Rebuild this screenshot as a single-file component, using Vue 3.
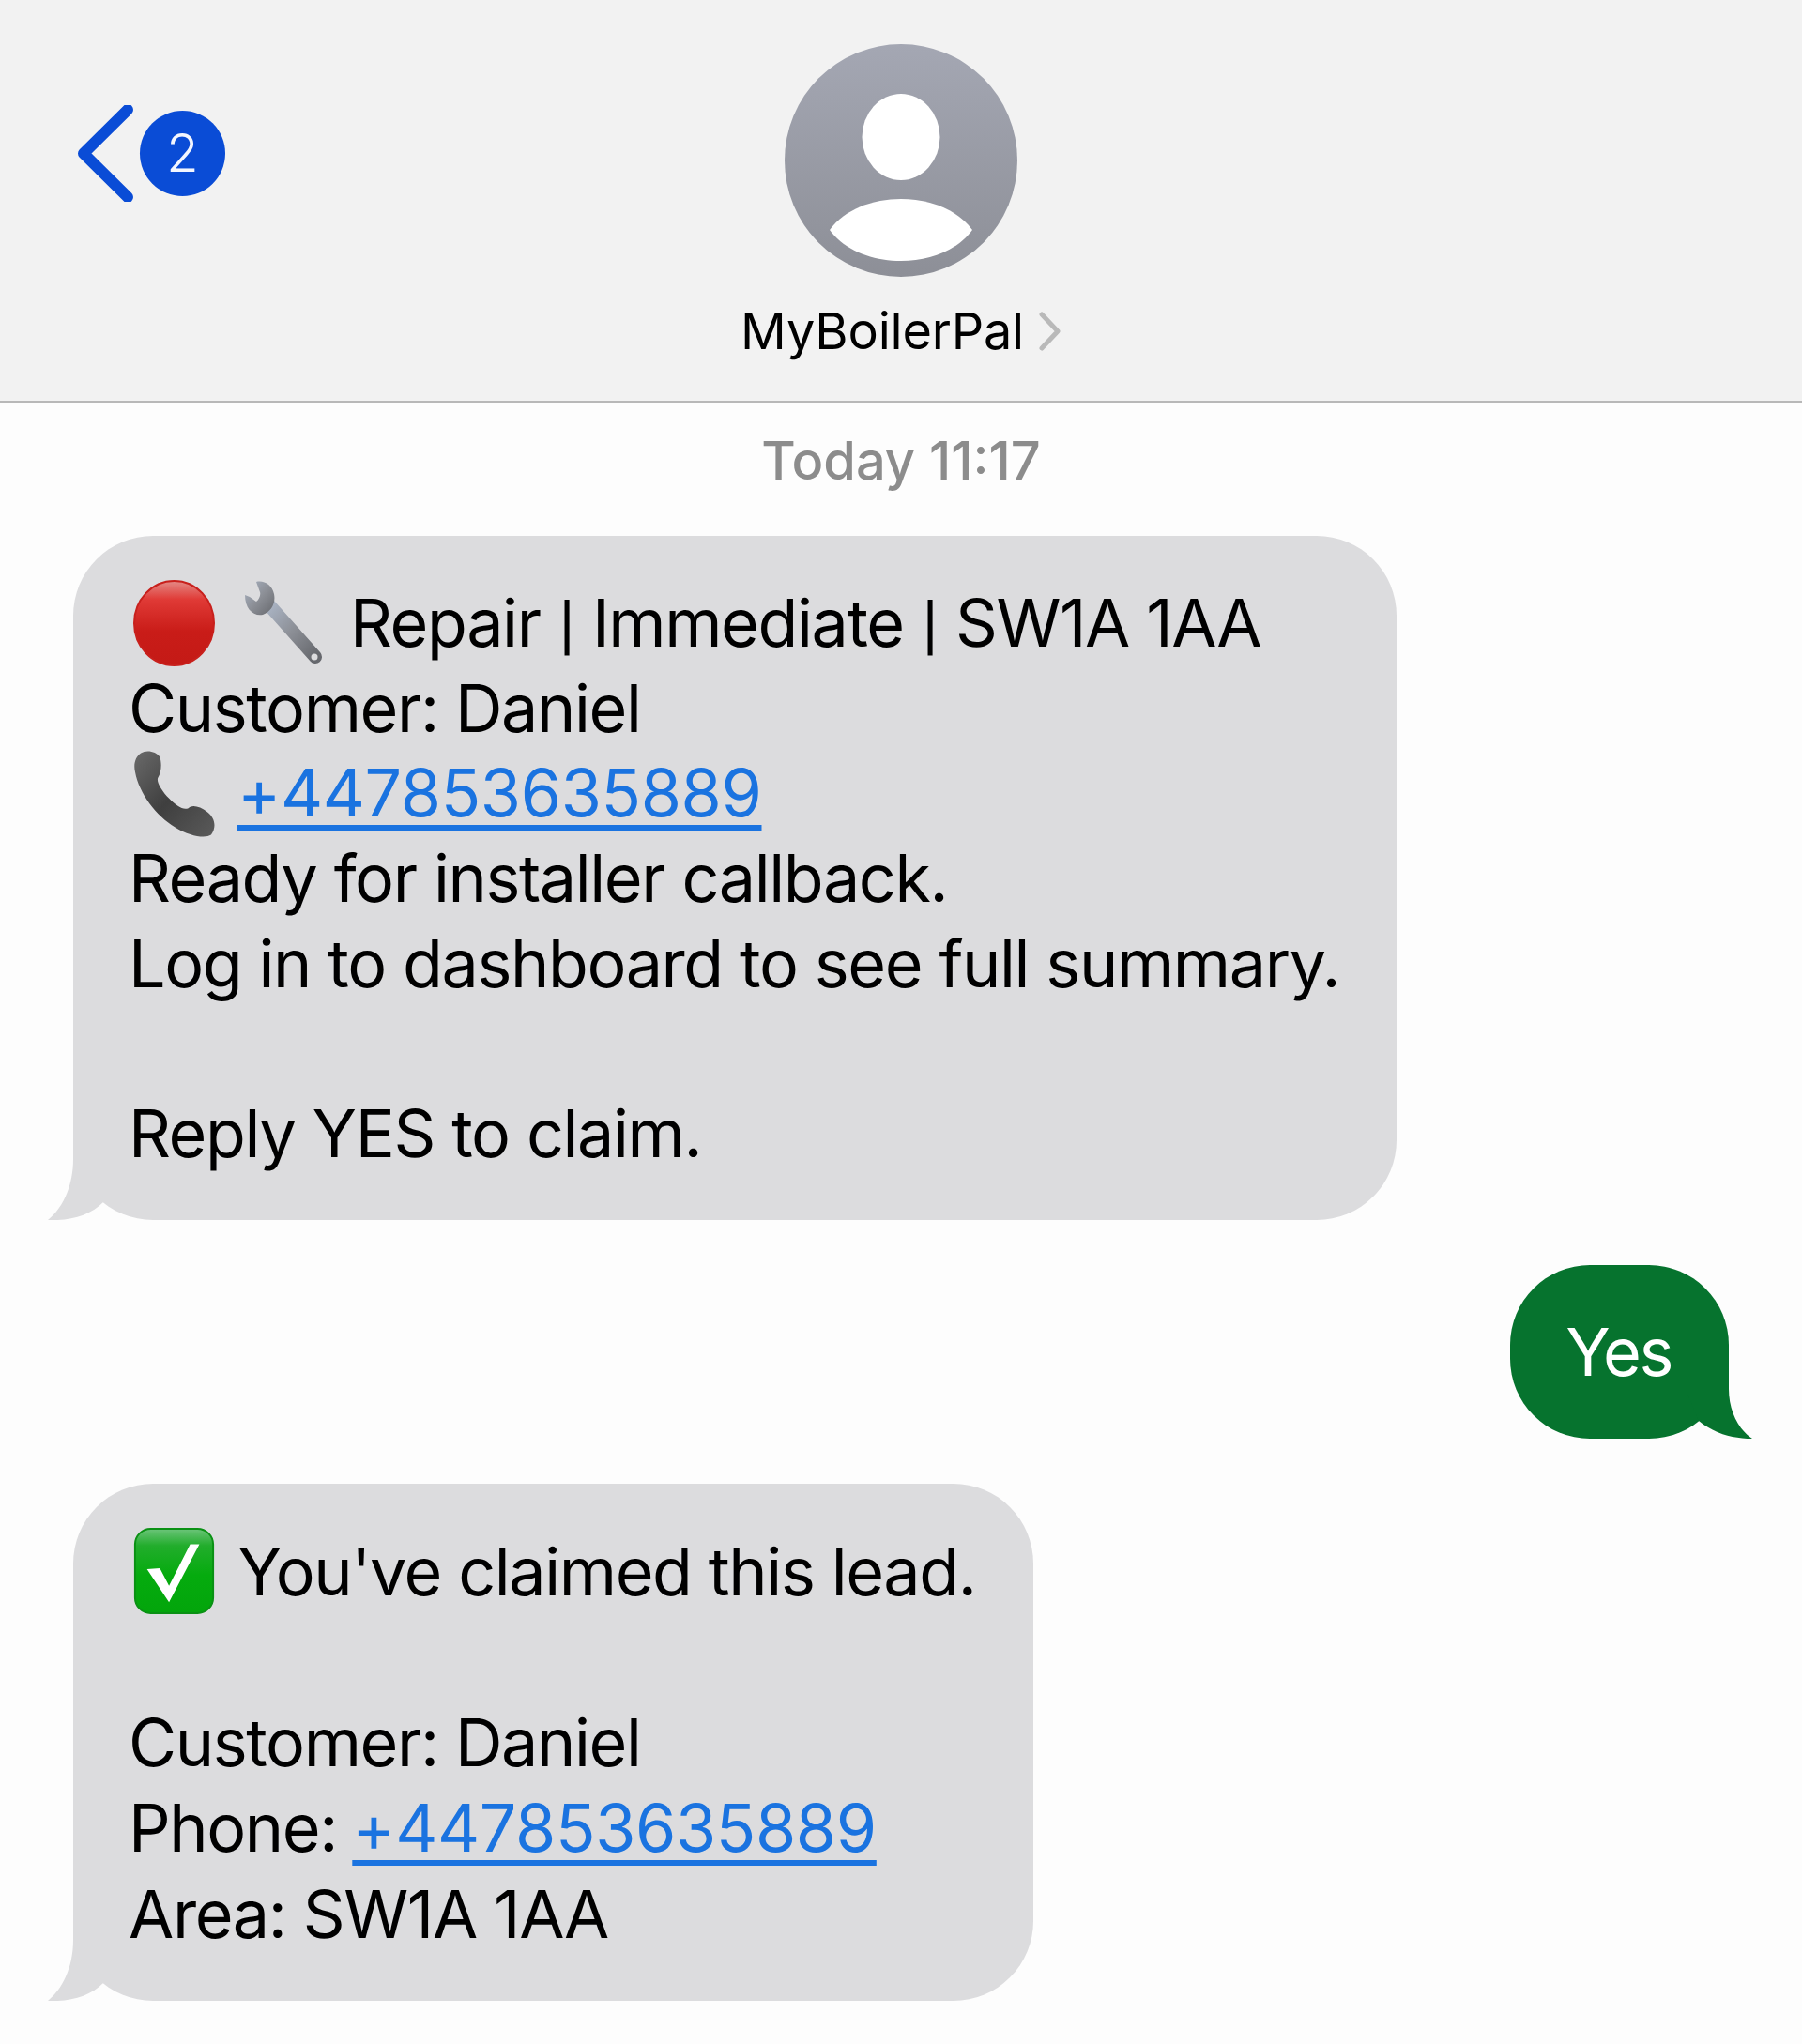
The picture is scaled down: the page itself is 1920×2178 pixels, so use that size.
<script setup>
const phone = '+447853635889'
</script>

<template>
  <div class="page">
    <header class="top">
      <div class="back">
        <svg class="chev" viewBox="0 0 60 103"><path d="M54 5 L7 51.500 L54 98" /></svg>
        <span class="badge">2</span>
      </div>
      <div class="contact">
        <svg class="avatar" viewBox="0 0 248 248">
          <defs>
            <linearGradient id="av" x1="0" y1="0" x2="0" y2="1">
              <stop offset="0" stop-color="#a4a7b3" />
              <stop offset="1" stop-color="#8d8f97" />
            </linearGradient>
          </defs>
          <circle cx="124" cy="124" r="124" fill="url(#av)" />
          <ellipse cx="124" cy="99" rx="41.500" ry="46" fill="#fff" />
          <path d="M48 198 C64 176 94 165 124 165 C154 165 184 176 200 198 C184 220 154 231 124 231 C94 231 64 220 48 198 Z" fill="#fff" />
        </svg>
        <div class="name">
          <span>MyBoilerPal</span>
          <svg class="more" viewBox="0 0 24 42"><path d="M3 3 L20 21 L3 39" /></svg>
        </div>
      </div>
      <div></div>
    </header>

    <main class="thread">
      <div class="stamp">Today 11:17</div>

      <div class="bubble in">
        <svg class="tail tail-in" viewBox="0 0 90 90"><path d="M27 0 L27 25 C27 55 15 78 0 90 C25 91 45 85 59 71 L90 40 L60 0 Z" /></svg>
        <div class="line">
          <svg class="emoji" viewBox="0 0 87 92">
            <defs>
              <linearGradient id="red" x1="0" y1="0" x2="0" y2="1">
                <stop offset="0" stop-color="#e48a86" />
                <stop offset=".22" stop-color="#e03a36" />
                <stop offset=".6" stop-color="#c91c18" />
                <stop offset="1" stop-color="#c41a16" />
              </linearGradient>
            </defs>
            <ellipse cx="43.500" cy="46" rx="42.500" ry="45" fill="url(#red)" stroke="#c8201c" stroke-width="2" />
          </svg>
          <svg class="wrench" viewBox="0 0 83 90">
            <defs>
              <linearGradient id="wr" x1="0" y1="0" x2="1" y2="1">
                <stop offset="0" stop-color="#aab4c4" />
                <stop offset=".5" stop-color="#8c8f96" />
                <stop offset="1" stop-color="#66686d" />
              </linearGradient>
            </defs>
            <path d="M26 26 L75 81" stroke="url(#wr)" stroke-width="14" stroke-linecap="round" fill="none" />
            <path d="M12 1 C20 -1 29 4 31 14 C33 24 28 33 19 36 C9 38 0 30 0 15 L5 17 L12 22 C15 20 17 15 16 12 Z" fill="url(#wr)" />
            <circle cx="74" cy="81" r="3.500" fill="#dcdcde" />
          </svg>
          <span>Repair <span class="pipe">|</span> Immediate <span class="pipe">|</span> SW1A 1AA</span>
        </div>
        <div class="line">Customer: Daniel</div>
        <div class="line">
          <svg class="emoji" viewBox="0 0 86 90">
            <defs>
              <linearGradient id="ph" x1="0" y1="0" x2="1" y2="1">
                <stop offset="0" stop-color="#6a6a6a" />
                <stop offset=".5" stop-color="#3f3f3f" />
                <stop offset="1" stop-color="#5a5a5a" />
              </linearGradient>
            </defs>
            <path d="M8 2 C14 -2 24 0 28 6 C30 12 30 22 26 28 C24 32 30 42 38 50 C46 58 52 62 58 60 C62 56 70 58 78 64 C86 70 88 80 82 88 C76 92 60 90 44 80 C24 68 6 44 2 22 C0 14 2 6 8 2 Z" fill="url(#ph)" />
          </svg>
          <a class="link">{{ phone }}</a>
        </div>
        <div class="line">Ready for installer callback.</div>
        <div class="line">Log in to dashboard to see full summary.</div>
        <div class="line"></div>
        <div class="line">Reply YES to claim.</div>
      </div>

      <div class="bubble out">
        <svg class="tail tail-out" viewBox="0 0 90 90"><path d="M65 0 L65 37 C65 60 75 80 90 90 C70 90 50 85 33 71 L20 40 Z" /></svg>
        <div class="line">Yes</div>
      </div>

      <div class="bubble in claimed">
        <svg class="tail tail-in" viewBox="0 0 90 90"><path d="M27 0 L27 25 C27 55 15 78 0 90 C25 91 45 85 59 71 L90 40 L60 0 Z" /></svg>
        <div class="line">
          <svg class="emoji" viewBox="0 0 87 94">
            <defs>
              <linearGradient id="gr" x1="0" y1="0" x2="0" y2="1">
                <stop offset="0" stop-color="#6cc47a" />
                <stop offset=".2" stop-color="#22ad2c" />
                <stop offset=".55" stop-color="#05ab0e" />
                <stop offset="1" stop-color="#03a50b" />
              </linearGradient>
            </defs>
            <rect x="1" y="1" width="85" height="92" rx="17" fill="url(#gr)" stroke="#0a9114" stroke-width="2" />
            <path d="M14 45 L28 44 L38 63 L61 18 L71 18 L38 81 Z" fill="#fff" />
          </svg>
          <span>You've claimed this lead.</span>
        </div>
        <div class="line"></div>
        <div class="line">Customer: Daniel</div>
        <div class="line"><span>Phone:&nbsp;</span><a class="link tight">{{ phone }}</a></div>
        <div class="line">Area: SW1A 1AA</div>
      </div>
    </main>
  </div>
</template>

<style scoped>
.page {
  min-height: 2178px;
  background: #fdfdfd;
  font-family: Inter, "Liberation Sans", sans-serif;
  color: #000;
  overflow: hidden;
}
.top {
  height: 429px;
  box-sizing: border-box;
  background: #f2f2f2;
  border-bottom: 2px solid #b8b8b8;
  display: grid;
  grid-template-columns: 1fr auto 1fr;
  padding: 47px 0 0 82px;
}
.back {
  display: flex;
  align-items: center;
  gap: 7px;
  height: 232px;
}
.chev {
  width: 60px;
  height: 103px;
  fill: none;
  stroke: #0a4cd6;
  stroke-width: 12;
  stroke-linecap: round;
  stroke-linejoin: round;
}
.badge {
  width: 91px;
  height: 91px;
  border-radius: 50%;
  background: #0a4cd6;
  color: #f3f6ff;
  font-size: 56px;
  font-weight: 300;
  display: flex;
  align-items: center;
  justify-content: center;
}
.contact {
  display: flex;
  flex-direction: column;
  align-items: center;
  margin-left: -82px;
}
.avatar {
  width: 248px;
  height: 248px;
}
.name {
  display: flex;
  align-items: center;
  gap: 16px;
  margin-top: 28px;
  font-size: 54px;
  line-height: 60px;
  letter-spacing: -0.2px;
}
.more {
  width: 24px;
  height: 42px;
  fill: none;
  stroke: #b9b9b9;
  stroke-width: 5;
  stroke-linecap: round;
  stroke-linejoin: round;
}
.thread {
  display: flex;
  flex-direction: column;
  padding: 0 78px;
}
.stamp {
  text-align: center;
  color: #8c8c8c;
  font-size: 56px;
  font-weight: 500;
  line-height: 60px;
  margin: 32px 0 50px;
}
.bubble {
  position: relative;
  width: fit-content;
  padding: 48px 61px 46px 59px;
  border-radius: 85px;
  font-size: 70px;
  letter-spacing: -1.4px;
  margin-bottom: 48px;
}
.in {
  background: #dcdcde;
  fill: #dcdcde;
}
.out {
  align-self: flex-end;
  background: #06732e;
  fill: #06732e;
  color: #fff;
  letter-spacing: -2.4px;
}
.line {
  display: flex;
  align-items: center;
  height: 90.7px;
  line-height: 90.7px;
  white-space: nowrap;
}
.claimed .line {
  height: 91.3px;
  line-height: 91.3px;
}
.claimed {
  padding-bottom: 47px;
}
.tail {
  position: absolute;
  bottom: 0;
}
.tail-in {
  left: -27px;
  width: 90px;
  height: 90px;
}
.tail-out {
  right: -25px;
  width: 90px;
  height: 90px;
}
.emoji {
  width: 87px;
  height: 92px;
  flex: none;
  margin: 0 24px 0 5px;
}
.wrench {
  width: 83px;
  height: 90px;
  flex: none;
  margin: 0 29px 0 8px;
}
.pipe {
  font-family: Roboto, sans-serif;
  margin: 0 1.5px;
}
.link {
  color: #1a73e0;
  letter-spacing: -0.4px;
  text-decoration: underline;
  text-decoration-thickness: 6px;
  text-underline-offset: 9px;
}
.tight {
  margin-left: -2px;
}
</style>
